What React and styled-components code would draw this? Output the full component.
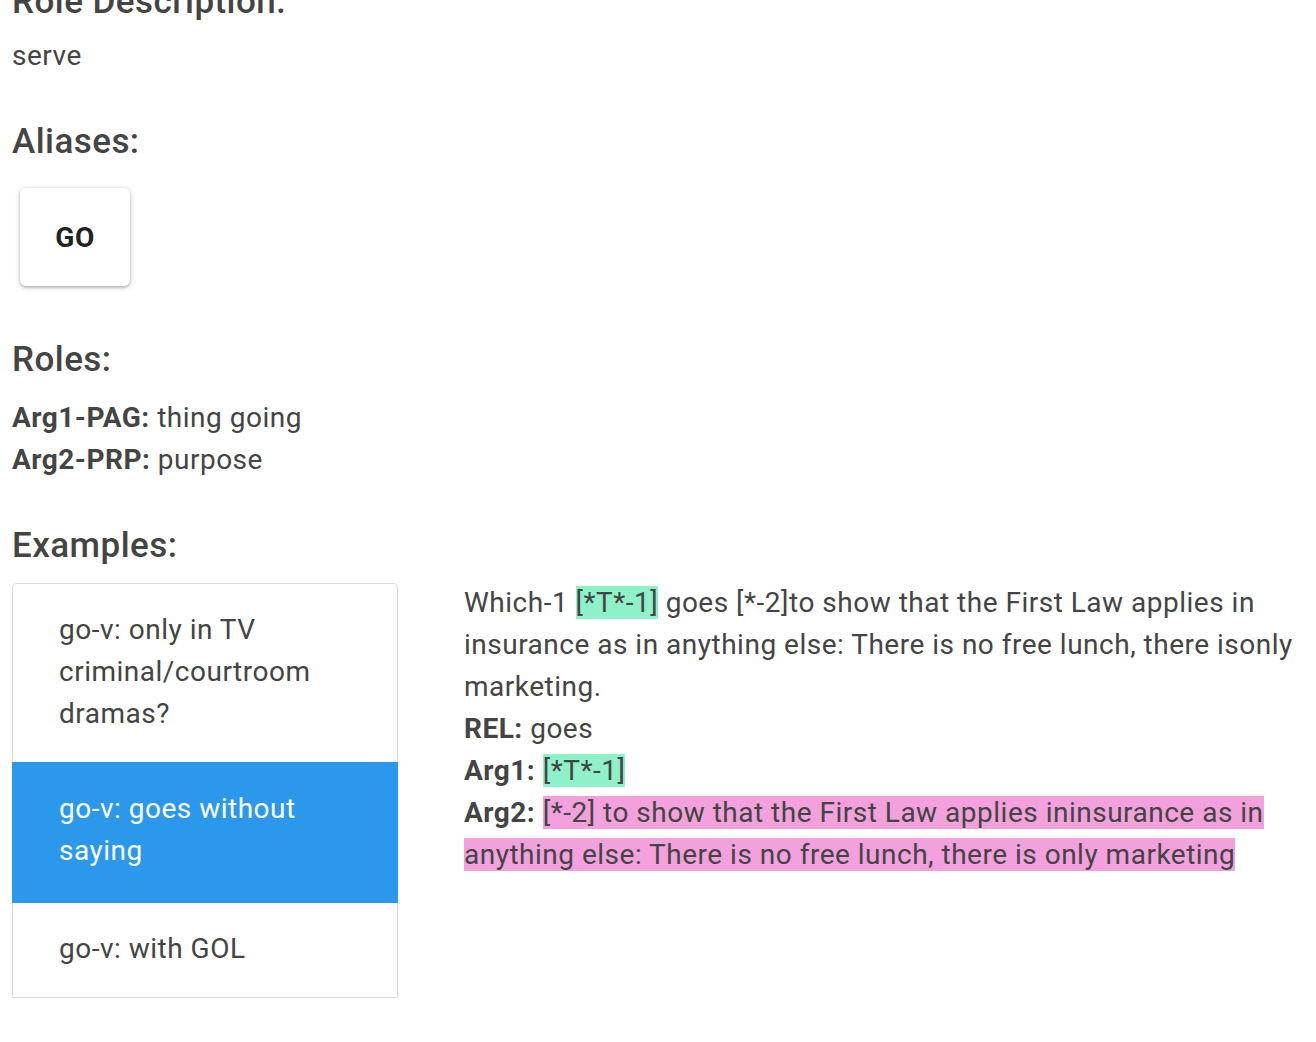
import React from "react"
import styled, { createGlobalStyle } from "styled-components"

const GlobalStyle = createGlobalStyle`
  html, body {
    margin: 0;
    padding: 0;
    background: #ffffff;
  }
  body {
    font-family: Roboto, "Liberation Sans", sans-serif;
    color: #444444;
    overflow: hidden;
  }
`

const Page = styled.div`
  padding: 0 12px;
  margin-top: -19px;
`

const Heading = styled.h6`
  margin: ${props => (props.first ? "0" : "44px")} 0 ${props => (props.tight ? "12px" : "16px")};
  font-size: 35px;
  line-height: 42px;
  font-weight: 500;
  letter-spacing: 0.45px;
  color: #444444;
`

const Text = styled.p`
  margin: 0;
  font-size: 28px;
  line-height: 42px;
  letter-spacing: 0.5px;
`

const Label = styled.b`
  font-weight: 700;
`

const AliasRow = styled.div`
  display: flex;
  gap: 16px;
  padding: 9px 8px 9px;
`

const AliasCard = styled.div`
  width: 110px;
  height: 98px;
  display: flex;
  align-items: center;
  justify-content: center;
  background: #ffffff;
  border-radius: 6px;
  box-shadow: 0 1px 5px rgba(0, 0, 0, 0.28), 0 2px 2px rgba(0, 0, 0, 0.1);
  font-size: 28px;
  font-weight: 700;
  letter-spacing: 0.5px;
  color: #222222;
  text-transform: uppercase;
`

const ExampleArea = styled.div`
  display: flex;
  align-items: flex-start;
  gap: 66px;
  margin-top: 2px;
`

const ExampleList = styled.ul`
  flex: 0 0 386px;
  box-sizing: border-box;
  margin: 0;
  padding: 0;
  list-style: none;
  border: 1px solid #dcdcdc;
  border-radius: 4px 4px 0 0;
`

const ExampleItem = styled.li`
  padding: 25px 46px 27px;
  font-size: 28px;
  line-height: 42px;
  letter-spacing: 0.5px;
  cursor: pointer;
  ${props =>
    props.active
      ? "background: #2b98ec; color: #ffffff; margin: 0 -1px; padding: 26px 46px 31px 47px;"
      : "color: #444444;"}
`

const ExampleText = styled.div`
  flex: 1;
  min-width: 0;
  font-size: 28px;
  line-height: 42px;
  letter-spacing: 0.5px;
  margin-top: -1px;
`

const Mark = styled.span`
  background: ${props => (props.tone === "pink" ? "#f2a1dc" : "#8ef1c9")};
`

const examples = [
  { id: 1, name: "go-v: only in TV criminal/courtroom dramas?" },
  { id: 2, name: "go-v: goes without saying", active: true },
  { id: 3, name: "go-v: with GOL" },
]

export default function App() {
  return (
    <>
      <GlobalStyle />
      <Page>
        <Heading first tight>Role Description:</Heading>
        <Text>serve</Text>

        <Heading>Aliases:</Heading>
        <AliasRow>
          <AliasCard>go</AliasCard>
        </AliasRow>

        <Heading>Roles:</Heading>
        <Text>
          <Label>Arg1-PAG:</Label> thing going
        </Text>
        <Text>
          <Label>Arg2-PRP:</Label> purpose
        </Text>

        <Heading>Examples:</Heading>
        <ExampleArea>
          <ExampleList>
            {examples.map(ex => (
              <ExampleItem key={ex.id} active={ex.active}>
                {ex.name}
              </ExampleItem>
            ))}
          </ExampleList>
          <ExampleText>
            <div>
              Which-1 <Mark>[*T*-1]</Mark> goes [*-2]to show that the First Law applies in
              insurance as in anything else: There is no free lunch, there isonly marketing.
            </div>
            <div>
              <Label>REL:</Label> goes
            </div>
            <div>
              <Label>Arg1:</Label> <Mark>[*T*-1]</Mark>
            </div>
            <div>
              <Label>Arg2:</Label>{" "}
              <Mark tone="pink">
                [*-2] to show that the First Law applies ininsurance as in anything else: There is
                no free lunch, there is only marketing
              </Mark>
            </div>
          </ExampleText>
        </ExampleArea>
      </Page>
    </>
  )
}
